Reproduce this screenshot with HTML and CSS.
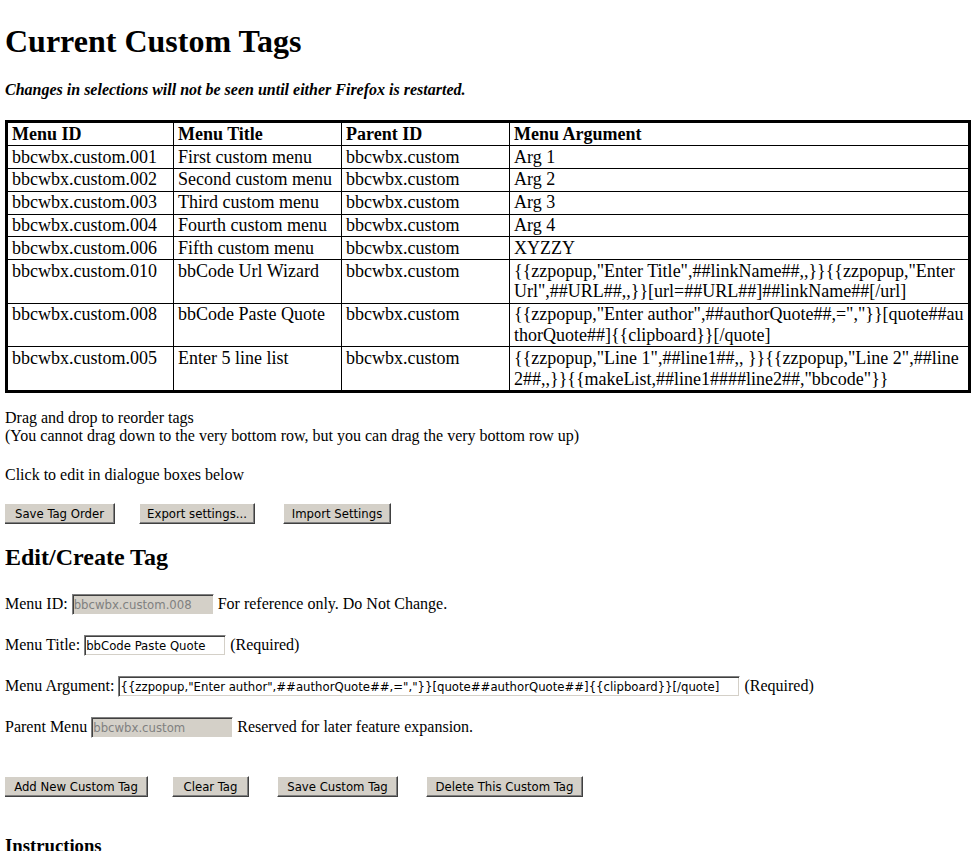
FILE: index.html
```html
<!DOCTYPE html>
<html>
<head>
<meta charset="utf-8">
<title>Custom Tags</title>
<link rel="stylesheet" href="styles.css">
</head>
<body>
<h1 class="title">Current Custom Tags</h1>
<h4 class="note"><i>Changes in selections will not be seen until either Firefox is restarted.</i></h4>
<table class="tags">
<colgroup><col class="c1"><col class="c2"><col class="c3"><col class="c4"></colgroup>
<thead>
<tr><th>Menu ID</th><th>Menu Title</th><th>Parent ID</th><th>Menu Argument</th></tr>
</thead>
<tbody>
<tr><td>bbcwbx.custom.001</td><td>First custom menu</td><td>bbcwbx.custom</td><td>Arg 1</td></tr>
<tr><td>bbcwbx.custom.002</td><td>Second custom menu</td><td>bbcwbx.custom</td><td>Arg 2</td></tr>
<tr><td>bbcwbx.custom.003</td><td>Third custom menu</td><td>bbcwbx.custom</td><td>Arg 3</td></tr>
<tr><td>bbcwbx.custom.004</td><td>Fourth custom menu</td><td>bbcwbx.custom</td><td>Arg 4</td></tr>
<tr><td>bbcwbx.custom.006</td><td>Fifth custom menu</td><td>bbcwbx.custom</td><td>XYZZY</td></tr>
<tr><td>bbcwbx.custom.010</td><td>bbCode Url Wizard</td><td>bbcwbx.custom</td><td class="arg">{{zzpopup,"Enter Title",##linkName##,,}}{{zzpopup,"Enter Url",##URL##,,}}[url=##URL##]##linkName##[/url]</td></tr>
<tr><td>bbcwbx.custom.008</td><td>bbCode Paste Quote</td><td>bbcwbx.custom</td><td class="arg">{{zzpopup,"Enter author",##authorQuote##,=","}}[quote##authorQuote##]{{clipboard}}[/quote]</td></tr>
<tr><td>bbcwbx.custom.005</td><td>Enter 5 line list</td><td>bbcwbx.custom</td><td class="arg">{{zzpopup,"Line 1",##line1##,, }}{{zzpopup,"Line 2",##line2##,,}}{{makeList,##line1####line2##,"bbcode"}}</td></tr>
</tbody>
</table>
<p class="hint">Drag and drop to reorder tags<br>(You cannot drag down to the very bottom row, but you can drag the very bottom row up)</p>
<p class="hint2">Click to edit in dialogue boxes below</p>
<div class="btnrow top-row">
<button class="btn b-save-order">Save Tag Order</button>
<button class="btn b-export">Export settings...</button>
<button class="btn b-import">Import Settings</button>
</div>
<h2 class="sub">Edit/Create Tag</h2>
<p class="field">Menu ID: <input class="inp inp-short inp-off" type="text" disabled value="bbcwbx.custom.008"> For reference only. Do Not Change.</p>
<p class="field">Menu Title: <input class="inp inp-short" type="text" value="bbCode Paste Quote"> (Required)</p>
<p class="field">Menu Argument: <input class="inp inp-long" type="text" value="{{zzpopup,&quot;Enter author&quot;,##authorQuote##,=&quot;,&quot;}}[quote##authorQuote##]{{clipboard}}[/quote]"> (Required)</p>
<p class="field">Parent Menu <input class="inp inp-short inp-off" type="text" disabled value="bbcwbx.custom"> Reserved for later feature expansion.</p>
<div class="btnrow bottom-row">
<button class="btn b-add">Add New Custom Tag</button>
<button class="btn b-clear">Clear Tag</button>
<button class="btn b-save">Save Custom Tag</button>
<button class="btn b-delete">Delete This Custom Tag</button>
</div>
<h3 class="instr">Instructions</h3>
</body>
</html>
```
FILE: styles.css
```css
html, body {
  background: #fff;
  color: #000;
}
body {
  margin: 8px 4px 8px 5px;
  font-family: "Liberation Serif", "Times New Roman", serif;
  font-size: 16px;
  line-height: 1.15;
}
.title {
  font-size: 32px;
  font-weight: bold;
  margin: 14.5px 0 21.44px;
}
.note {
  font-size: 16px;
  margin: 21.28px 0;
}
.tags {
  width: 100%;
  table-layout: fixed;
  border-collapse: collapse;
  border: 3px solid #000;
  font-size: 18px;
  line-height: 20.8px;
}
.c1 { width: 167px; }
.c2 { width: 168px; }
.c3 { width: 168px; }
.tags th, .tags td {
  border: 1px solid #000;
  padding: 0.5px 2px 0.5px 4px;
  text-align: left;
  vertical-align: top;
}
.tags th { font-weight: bold; }
.tags td.arg { word-break: break-all; }
.hint {
  margin: 16px 0 0;
}
.hint2 {
  margin: 20.5px 0 18px;
}
.btnrow {
  display: flex;
  align-items: flex-start;
}
.top-row { margin-left: -1px; }
.bottom-row { margin: 37px 0 0 -1px; }
.btn {
  height: 21px;
  padding: 0;
  margin: 0;
  background: #d4d0c8;
  color: #000;
  font-family: "DejaVu Sans Condensed", "DejaVu Sans", sans-serif;
  font-stretch: semi-condensed;
  font-size: 13px;
  white-space: nowrap;
  border: 1px solid;
  border-color: #fff #404040 #404040 #fff;
  box-shadow: inset -1px -1px #808080;
  text-align: center;
}
.b-save-order { width: 111px; }
.b-export { width: 116px; margin-left: 24px; }
.b-import { width: 108px; margin-left: 28px; }
.b-add { width: 144px; }
.b-clear { width: 77px; margin-left: 24px; }
.b-save { width: 121px; margin-left: 28px; }
.b-delete { width: 157px; margin-left: 28px; }
.sub {
  font-size: 24px;
  margin: 20px 0 19.92px;
}
.field {
  margin: 16px 0;
  line-height: 25px;
}
.inp {
  box-sizing: border-box;
  height: 21px;
  vertical-align: baseline;
  margin: 0;
  padding: 0 1px;
  font-family: "DejaVu Sans Condensed", "DejaVu Sans", sans-serif;
  font-stretch: semi-condensed;
  font-size: 13px;
  color: #000;
  background: #fff;
  border: 1px solid;
  border-color: #808080 #fff #fff #808080;
  box-shadow: inset 1px 1px #404040, inset -1px -1px #d4d0c8;
  outline: none;
}
.inp-short { width: 142px; }
.inp-long { width: 622px; }
.inp-off {
  background: #d4d0c8;
  color: #808080;
  -webkit-text-fill-color: #808080;
  opacity: 1;
}
.instr {
  font-size: 18.72px;
  margin: 38px 0 18.72px;
}
```
